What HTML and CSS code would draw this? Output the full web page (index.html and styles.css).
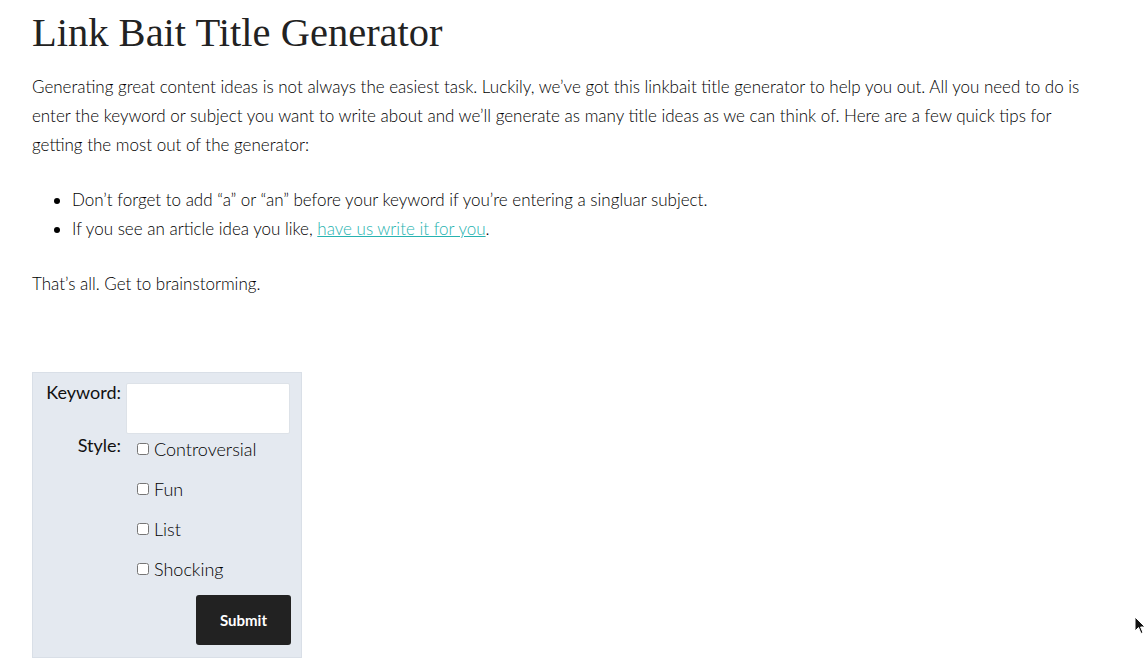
FILE: index.html
```html
<!DOCTYPE html>
<html>
<head>
<meta charset="utf-8">
<link rel="stylesheet" href="styles.css">
</head>
<body>
<main class="page">
  <h1 class="title">Link Bait Title Generator</h1>
  <p class="text">Generating great content ideas is not always the easiest task. Luckily, we’ve got this linkbait title generator to help you out. All you need to do is enter the keyword or subject you want to write about and we’ll generate as many title ideas as we can think of. Here are a few quick tips for<br>getting the most out of the generator:</p>
  <ul class="tips">
    <li>Don’t forget to add “a” or “an” before your keyword if you’re entering a singluar subject.</li>
    <li>If you see an article idea you like, <a href="#" class="link">have us write it for you</a>.</li>
  </ul>
  <p class="text">That’s all. Get to brainstorming.</p>

  <form class="gen-form">
    <div class="label label-kw">Keyword:</div>
    <div class="field"><input type="text" class="kw-input"></div>
    <div class="label label-style">Style:</div>
    <div class="options">
      <label class="opt"><input type="checkbox" class="cb"><span>Controversial</span></label>
      <label class="opt"><input type="checkbox" class="cb"><span>Fun</span></label>
      <label class="opt"><input type="checkbox" class="cb"><span>List</span></label>
      <label class="opt"><input type="checkbox" class="cb"><span>Shocking</span></label>
    </div>
    <div class="actions"><button type="button" class="submit">Submit</button></div>
  </form>
</main>
<svg class="cursor" width="12" height="19" viewBox="0 0 12 19"><path d="M1 1 L1 15 L4.5 11.5 L7 17.5 L9 16.6 L6.6 11 L11 11 Z" fill="#111" stroke="#fff" stroke-width="1"/></svg>
</body>
</html>
```
FILE: styles.css
```css
html, body { margin: 0; padding: 0; background: #fff; }
body {
  font-family: Lato, "Open Sans", sans-serif;
  font-weight: 300;
  color: #000;
  font-size: 17px;
  line-height: 29px;
}
.page { padding: 0 0 0 32px; width: 1090px; }
.title {
  font-family: "Liberation Serif", "DejaVu Serif", serif;
  font-weight: normal;
  font-size: 40.5px;
  line-height: 44px;
  margin: 11px 0 17px;
  color: #222;
}
.text { margin: 0 0 26px; }
.tips { margin: 0 0 26px; padding-left: 40px; }
.link { color: #27b3b0; text-decoration: underline; }
.gen-form {
  margin-top: 74px;
  width: 270px;
  background: #e4e9f0;
  border: 1px solid #d9dfe7;
  display: grid;
  grid-template-columns: 88px 1fr;
  column-gap: 5px;
  padding: 10px 10px 10px 0;
  box-sizing: border-box;
  height: 286px;
}
.label { text-align: right; font-weight: 400; font-size: 18px; color: #111; }
.label-kw { padding-top: 0; margin-top: -5px; }
.label-style { padding-top: 0; margin-top: -5px; }
.kw-input {
  width: 164px; height: 51px; box-sizing: border-box;
  border: 1px solid #dde2e8; border-radius: 2px; background: #fff;
  margin: 0; padding: 4px;
}
.options { display: flex; flex-direction: column; padding-left: 11px; margin-top: -7px; }
.opt { display: flex; align-items: center; height: 40px; gap: 5px; font-size: 18px; }
.cb { margin: 0; width: 12px; height: 12px; }
.actions { grid-column: 2; display: flex; justify-content: flex-end; margin-top: 4px; }
.submit {
  background: #222; color: #fff; border: none; border-radius: 3px;
  font-family: Lato, sans-serif; font-weight: 700; font-size: 15px;
  width: 95px; height: 50px;
}
.cursor { position: absolute; left: 1134px; top: 616px; }
```
